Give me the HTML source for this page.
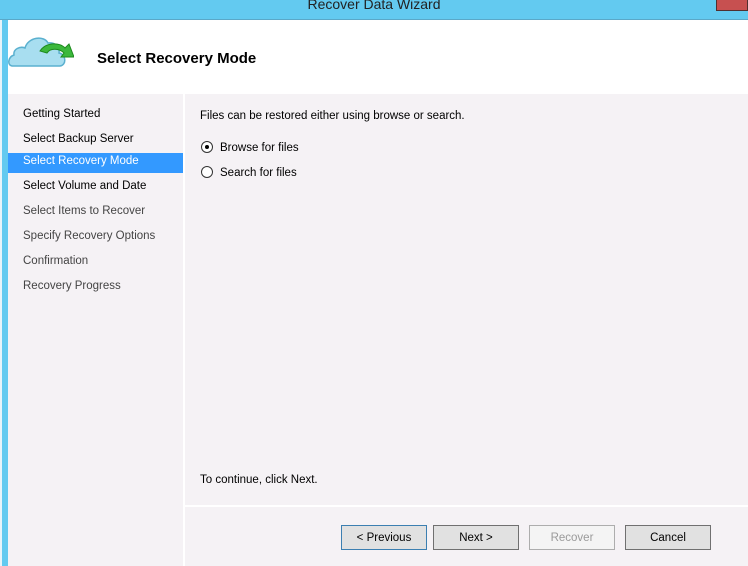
<!DOCTYPE html>
<html><head><style>
*{margin:0;padding:0;box-sizing:border-box}
body{width:748px;height:566px;overflow:hidden;background:#f5f2f5;font-family:"Liberation Sans",sans-serif;font-size:11.5px;color:#000;position:relative}
.a{position:absolute;white-space:nowrap}
.btn{position:absolute;top:525px;height:25px;width:86px;background:#e1e1e1;border:1px solid #707070;text-align:center;line-height:25px;font-size:11.5px}
.nav{position:absolute;left:23px;font-size:11.5px}
</style></head><body>
<div class="a" style="left:0;top:0;width:748px;height:20px;background:#63caf0;border-bottom:1px solid #5aa8c8"></div>
<div class="a" style="left:0;top:0;width:748px;text-align:center;font-size:14px;line-height:13px;top:-2px;color:#222">Recover Data Wizard</div>
<div class="a" style="left:716px;top:0;width:32px;height:11px;background:#c75050;border:1px solid #503030;border-top:none"></div>
<div class="a" style="left:0;top:20px;width:2px;height:546px;background:#e8f4fa"></div>
<div class="a" style="left:2px;top:20px;width:6px;height:546px;background:#63caf0"></div>
<div class="a" style="left:8px;top:20px;width:740px;height:74px;background:#fff"></div>
<svg class="a" style="left:8px;top:33px" width="66" height="36" viewBox="0 0 66 36">
<path d="M4 33 C-1 32 0 24 6 22 C5 16 12 13 17 15 C20 4 36 2 40 10 C47 9 52 14 51 20 C58 21 59 32 52 33 Z" fill="#a8def0" stroke="#5ab0cf" stroke-width="1.5"/>
<path d="M32 18 C38 9 52 9 57 15 L61 11 L66 24 L53 24 L56 20 C51 15 42 15 39 20 Z" fill="#3cb83c" stroke="#1d8a1d" stroke-width="1"/>
</svg>
<div class="a" style="left:97px;top:50px;font-size:15px;font-weight:bold">Select Recovery Mode</div>
<div class="a" style="left:183px;top:94px;width:2px;height:472px;background:#fff"></div>
<div class="a" style="left:185px;top:505px;width:563px;height:2px;background:#fff"></div>
<div class="a" style="left:8px;top:153px;width:175px;height:20px;background:#3399ff"></div>
<div class="nav a" style="top:108px">Getting Started</div>
<div class="nav a" style="top:133px">Select Backup Server</div>
<div class="nav a" style="top:155px;color:#fff">Select Recovery Mode</div>
<div class="nav a" style="top:180px">Select Volume and Date</div>
<div class="nav a" style="top:205px;color:#444">Select Items to Recover</div>
<div class="nav a" style="top:230px;color:#444">Specify Recovery Options</div>
<div class="nav a" style="top:255px;color:#444">Confirmation</div>
<div class="nav a" style="top:280px;color:#444">Recovery Progress</div>
<div class="a" style="left:200px;top:110px">Files can be restored either using browse or search.</div>
<div class="a" style="left:201px;top:141px;width:12px;height:12px;border:1px solid #333;border-radius:50%;background:#fff"></div>
<div class="a" style="left:205px;top:145px;width:4px;height:4px;border-radius:50%;background:#000"></div>
<div class="a" style="left:220px;top:142px">Browse for files</div>
<div class="a" style="left:201px;top:166px;width:12px;height:12px;border:1px solid #333;border-radius:50%;background:#fff"></div>
<div class="a" style="left:220px;top:167px">Search for files</div>
<div class="a" style="left:200px;top:474px">To continue, click Next.</div>
<div class="btn" style="left:341px;border-color:#3c7fb1">&lt; Previous</div>
<div class="btn" style="left:433px">Next &gt;</div>
<div class="btn" style="left:529px;background:#f4f4f4;border-color:#adadad;color:#9a9a9a">Recover</div>
<div class="btn" style="left:625px">Cancel</div>
</body></html>
